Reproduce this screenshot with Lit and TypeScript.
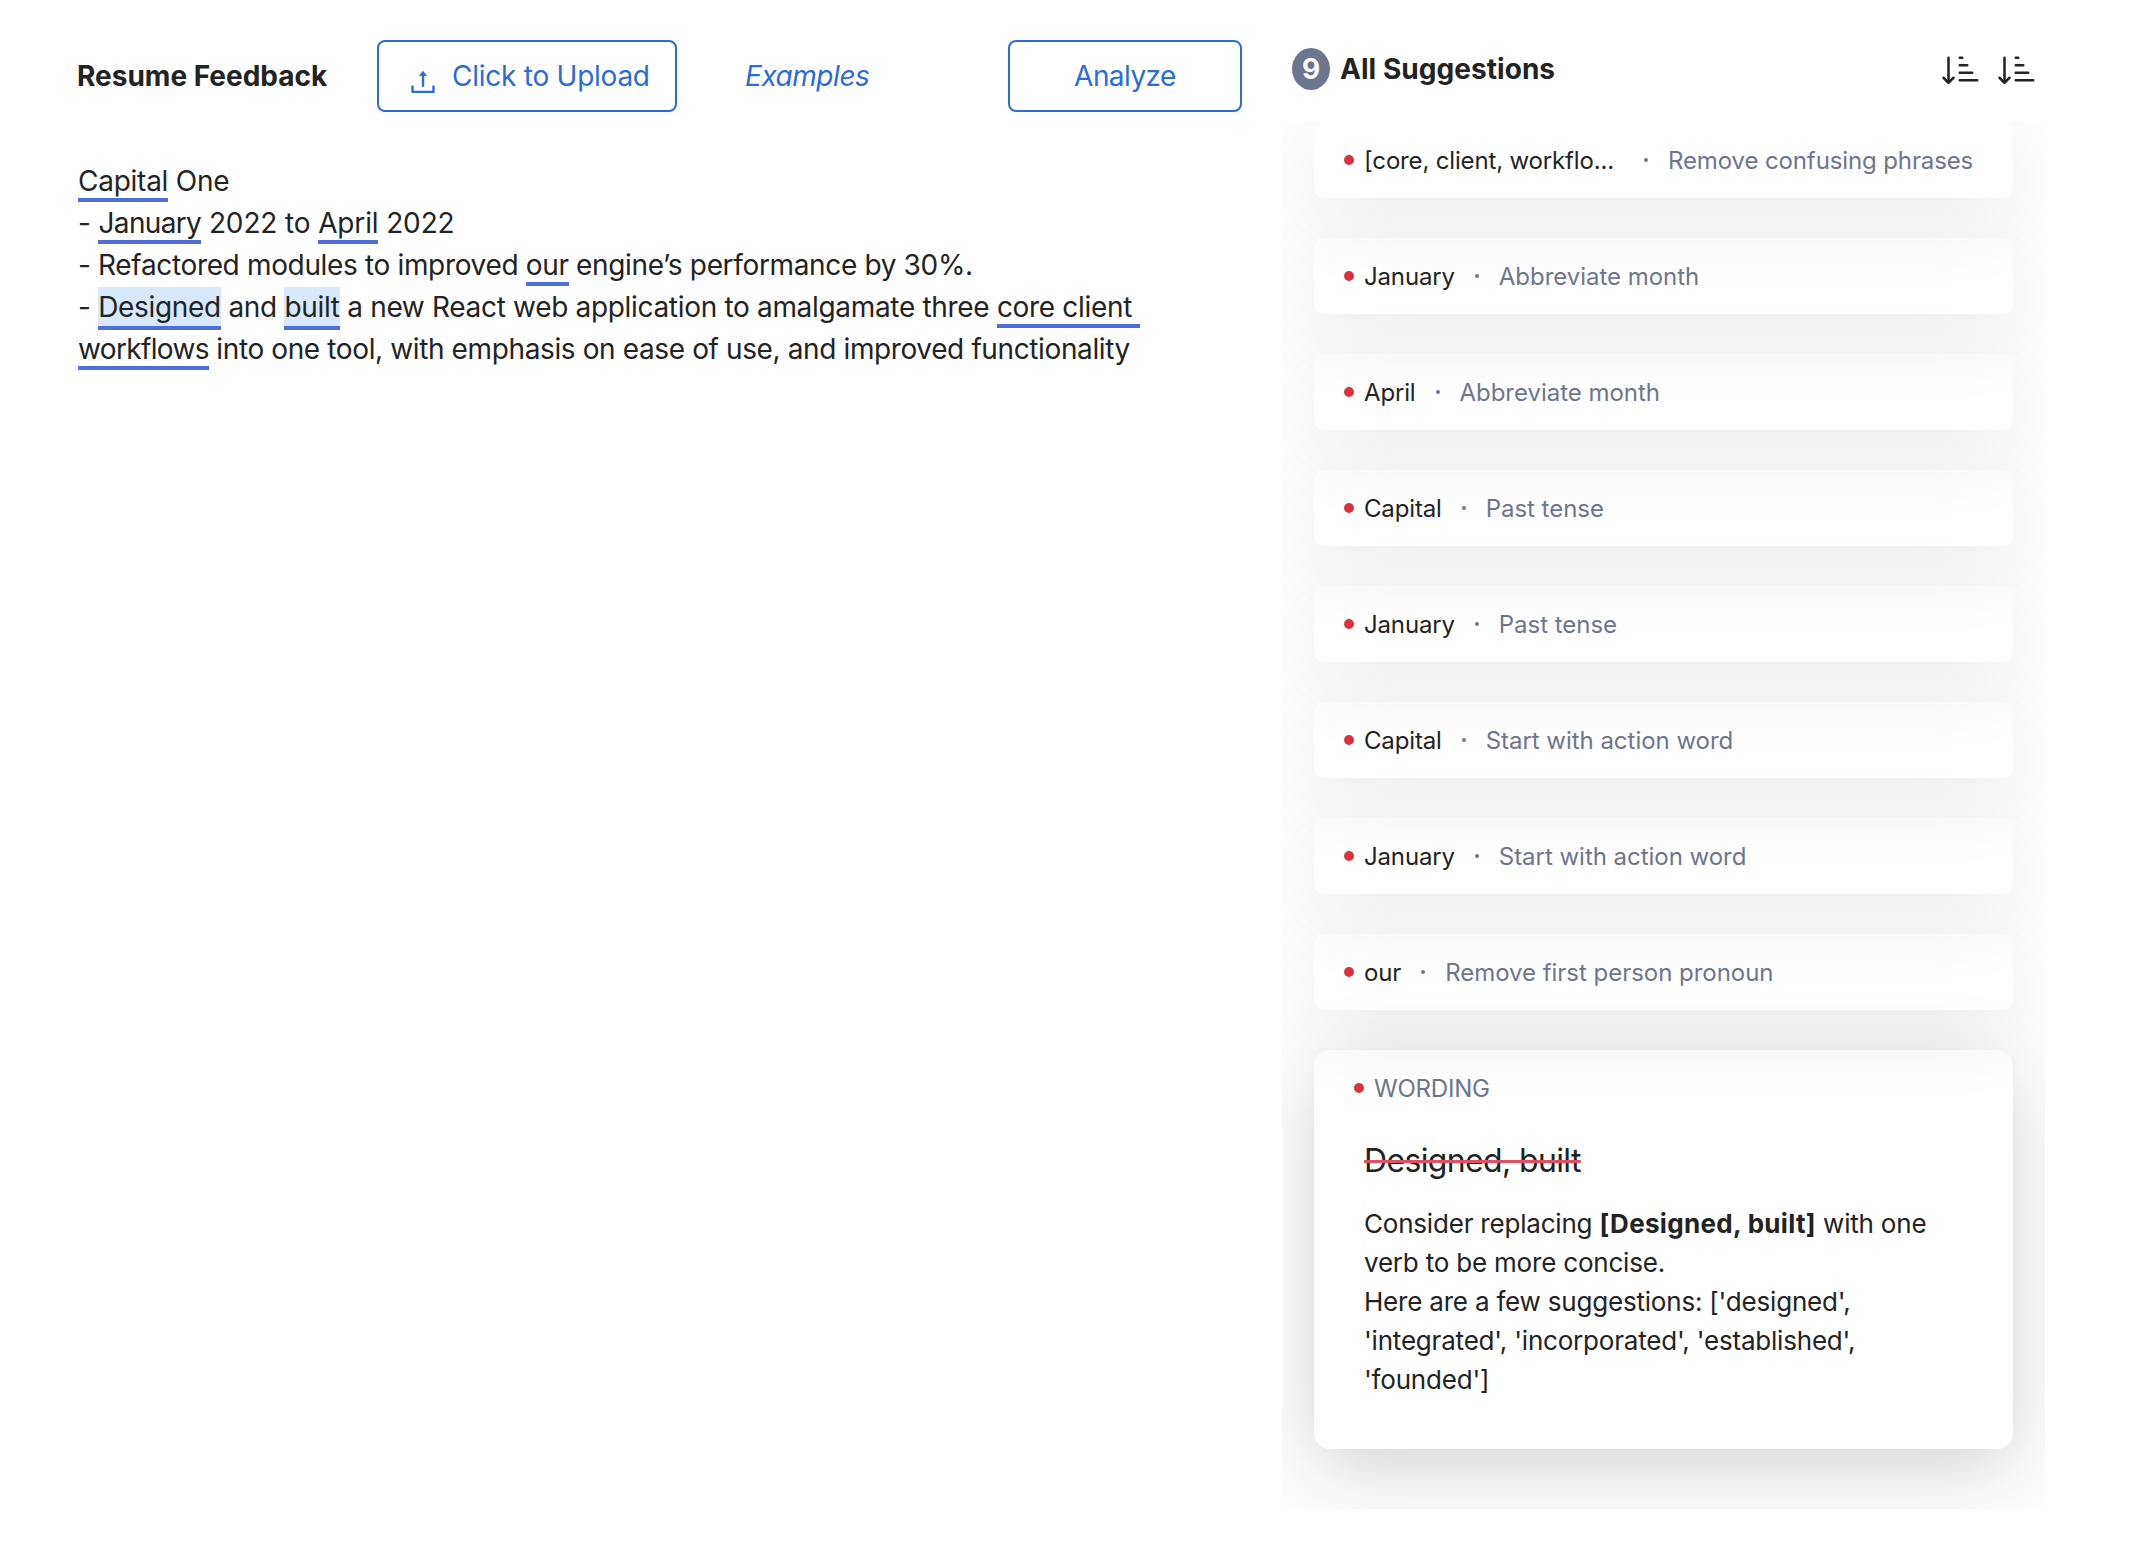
import { LitElement, html, css, svg } from "lit";
import { customElement, property } from "lit/decorators.js";
import { classMap } from "lit/directives/class-map.js";

interface Segment {
  text: string;
  mark?: "flagged" | "active";
}

interface Suggestion {
  phrase: string;
  advice: string;
  wide?: boolean;
}

const RESUME: Segment[][] = [
  [{ text: "Capital", mark: "flagged" }, { text: " One" }],
  [
    { text: "- " },
    { text: "January", mark: "flagged" },
    { text: " 2022 to " },
    { text: "April", mark: "flagged" },
    { text: " 2022" },
  ],
  [
    { text: "- Refactored modules to improved " },
    { text: "our", mark: "flagged" },
    { text: " engine’s performance by 30%." },
  ],
  [
    { text: "- " },
    { text: "Designed", mark: "active" },
    { text: " and " },
    { text: "built", mark: "active" },
    { text: " a new React web application to amalgamate three " },
    { text: "core client ", mark: "flagged" },
  ],
  [
    { text: "workflows", mark: "flagged" },
    { text: " into one tool, with emphasis on ease of use, and improved functionality" },
  ],
];

const SUGGESTIONS: Suggestion[] = [
  { phrase: "[core, client, workflo...", advice: "Remove confusing phrases", wide: true },
  { phrase: "January", advice: "Abbreviate month" },
  { phrase: "April", advice: "Abbreviate month" },
  { phrase: "Capital", advice: "Past tense" },
  { phrase: "January", advice: "Past tense" },
  { phrase: "Capital", advice: "Start with action word" },
  { phrase: "January", advice: "Start with action word" },
  { phrase: "our", advice: "Remove first person pronoun" },
];

const uploadIcon = svg`<path d="M400 317.7h73.9V656c0 4.4 3.6 8 8 8h60c4.4 0 8-3.6 8-8V317.7H624c6.7 0 10.4-7.7 6.3-12.9L518.3 163a8 8 0 00-12.6 0l-112 141.7c-4.1 5.3-.4 13 6.3 13zM878 626h-60c-4.4 0-8 3.6-8 8v154H214V634c0-4.4-3.6-8-8-8h-60c-4.4 0-8 3.6-8 8v198c0 17.7 14.3 32 32 32h684c17.7 0 32-14.3 32-32V634c0-4.4-3.6-8-8-8z"/>`;

const sortIcon = svg`<path d="M3.5 3.5a.5.5 0 0 0-1 0v8.793l-1.146-1.147a.5.5 0 0 0-.708.708l2 1.999.007.007a.497.497 0 0 0 .7-.006l2-2a.5.5 0 0 0-.707-.708L3.5 12.293V3.5zm4 .5a.5.5 0 0 1 0-1h1a.5.5 0 0 1 0 1h-1zm0 3a.5.5 0 0 1 0-1h3a.5.5 0 0 1 0 1h-3zm0 3a.5.5 0 0 1 0-1h5a.5.5 0 0 1 0 1h-5zM7 12.5a.5.5 0 0 0 .5.5h7a.5.5 0 0 0 0-1h-7a.5.5 0 0 0-.5.5z"/>`;

@customElement("resume-editor")
export class ResumeEditor extends LitElement {
  static styles = css`
    :host {
      display: block;
      padding: 40px 0 0 78px;
    }
    .toolbar {
      display: flex;
      align-items: center;
      height: 72px;
      margin-left: -1px;
    }
    .title {
      width: 300px;
      margin: 0;
      font-size: 28px;
      font-weight: 700;
      white-space: nowrap;
    }
    .button {
      box-sizing: border-box;
      display: flex;
      align-items: center;
      justify-content: center;
      height: 72px;
      border: 2px solid #2a6cda;
      border-radius: 8px;
      background: #fff;
      box-shadow: 0 4px 0 rgba(0, 0, 0, 0.016);
      color: #2a6cda;
      font: inherit;
      letter-spacing: -0.25px;
      white-space: nowrap;
    }
    .upload {
      width: 300px;
      padding: 0 0 0 30px;
      justify-content: flex-start;
      gap: 15px;
    }
    .upload svg {
      margin-top: 12px;
    }
    .analyze {
      width: 234px;
      padding: 0;
      letter-spacing: -0.55px;
    }
    .examples {
      width: 263px;
      margin-left: 68px;
      color: #2a6cda;
      font-style: italic;
      letter-spacing: -0.46px;
    }
    .document {
      margin-top: 48px;
      line-height: 42px;
      white-space: pre;
    }
    .line {
      height: 42px;
      letter-spacing: -0.38px;
    }
    .line:nth-child(1) {
      letter-spacing: -0.25px;
    }
    .line:nth-child(2) {
      letter-spacing: -0.14px;
    }
    .line:nth-child(3) {
      letter-spacing: -0.344px;
    }
    .line:nth-child(4) {
      letter-spacing: -0.32px;
    }
    .line:nth-child(2) .flagged:first-child,
    .line:nth-child(5) .flagged {
      letter-spacing: -0.65px;
    }
    .flagged,
    .active {
      border-bottom: 4px solid #4e6fdb;
    }
    .active {
      padding: 3px 0 2px;
      background: #d9e9fd;
      background-clip: padding-box;
    }
  `;

  render() {
    return html`
      <div class="toolbar">
        <h1 class="title">Resume Feedback</h1>
        <button class="button upload">
          <svg width="28" height="28" viewBox="64 64 896 896" fill="currentColor">${uploadIcon}</svg>
          <span>Click to Upload</span>
        </button>
        <span class="examples">Examples</span>
        <button class="button analyze">Analyze</button>
      </div>
      <div class="document">${RESUME.map(
        (line) =>
          html`<div class="line">${line.map((s) =>
            s.mark ? html`<span class=${s.mark}>${s.text}</span>` : s.text
          )}</div>`
      )}</div>
    `;
  }
}

@customElement("suggestion-card")
export class SuggestionCard extends LitElement {
  @property({ attribute: false }) item!: Suggestion;

  static styles = css`
    :host {
      display: block;
    }
    .card {
      box-sizing: border-box;
      display: flex;
      align-items: center;
      height: 76px;
      padding: 0 30px;
      border-radius: 10px;
      box-shadow: 0 20px 80px rgba(0, 0, 0, 0.085);
      font-size: 24px;
      white-space: nowrap;
    }
    .bullet {
      flex: none;
      width: 10px;
      height: 10px;
      margin-right: 10px;
      border-radius: 50%;
      background: #d9333f;
    }
    .phrase {
      letter-spacing: -0.16px;
    }
    .wide .phrase {
      width: 260px;
    }
    .separator {
      flex: none;
      width: 4px;
      height: 4px;
      margin: 0 20px;
      border-radius: 50%;
      background: #6d768d;
    }
    .advice {
      color: #6d768d;
      letter-spacing: -0.03px;
    }
    .wide .advice {
      letter-spacing: -0.12px;
    }
  `;

  render() {
    return html`<div class=${classMap({ card: true, wide: !!this.item.wide })}>
      <span class="bullet"></span>
      <span class="phrase">${this.item.phrase}</span>
      <span class="separator"></span>
      <span class="advice">${this.item.advice}</span>
    </div>`;
  }
}

@customElement("suggestion-detail")
export class SuggestionDetail extends LitElement {
  static styles = css`
    :host {
      display: block;
    }
    .card {
      box-sizing: border-box;
      height: 399px;
      padding: 0 40px;
      border-radius: 16px;
      box-shadow: 0 20px 80px rgba(0, 0, 0, 0.18);
    }
    .category {
      display: flex;
      align-items: center;
      gap: 10px;
      height: 76px;
      color: #6d768d;
      font-size: 24px;
      letter-spacing: -0.2px;
    }
    .bullet {
      width: 10px;
      height: 10px;
      border-radius: 50%;
      background: #d9333f;
    }
    .body {
      padding: 11px 0 0 10px;
      white-space: nowrap;
    }
    .phrase {
      margin: 0 0 19px;
      font-size: 32px;
      font-weight: 400;
      line-height: 48px;
      letter-spacing: -0.64px;
    }
    .struck {
      text-decoration: line-through 3px #e05062;
    }
    .advice {
      margin: 0;
      font-size: 26px;
      line-height: 39px;
      letter-spacing: -0.2px;
    }
    .quoted {
      font-weight: 700;
      letter-spacing: 0.32px;
    }
  `;

  render() {
    return html`<div class="card">
      <div class="category"><span class="bullet"></span>WORDING</div>
      <div class="body">
        <h3 class="phrase"><span class="struck">Designed, built</span></h3>
        <p class="advice">
          Consider replacing <b class="quoted">[Designed, built]</b> with one<br />
          verb to be more concise.<br />
          Here are a few suggestions: ['designed',<br />
          'integrated', 'incorporated', 'established',<br />
          'founded']
        </p>
      </div>
    </div>`;
  }
}

@customElement("suggestion-panel")
export class SuggestionPanel extends LitElement {
  static styles = css`
    :host {
      display: block;
      padding-top: 48px;
    }
    .header {
      display: flex;
      align-items: center;
      height: 42px;
      padding: 0 8px 0 10px;
    }
    .count {
      display: flex;
      align-items: center;
      justify-content: center;
      width: 38px;
      height: 42px;
      margin-right: 10px;
      border-radius: 50%;
      background: #6d768d;
      color: #fff;
      font-weight: 700;
    }
    .title {
      flex: 1;
      margin: 0;
      font-size: 28px;
      font-weight: 700;
      letter-spacing: 0.05px;
    }
    .sorts {
      display: flex;
      gap: 16px;
    }
    .list {
      box-sizing: border-box;
      display: flex;
      flex-direction: column;
      gap: 40px;
      height: 1387px;
      margin-top: 32px;
      padding: 0 32px;
      overflow: hidden;
    }
  `;

  private sort() {
    return html`<svg width="40" height="40" viewBox="0 0 16 16" fill="currentColor">${sortIcon}</svg>`;
  }

  render() {
    return html`
      <div class="header">
        <span class="count">9</span>
        <h2 class="title">All Suggestions</h2>
        <div class="sorts">${this.sort()}${this.sort()}</div>
      </div>
      <div class="list">
        ${SUGGESTIONS.map((s) => html`<suggestion-card .item=${s}></suggestion-card>`)}
        <suggestion-detail></suggestion-detail>
      </div>
    `;
  }
}

@customElement("app-root")
export class AppRoot extends LitElement {
  static styles = css`
    :host {
      display: grid;
      grid-template-columns: 1282px 763px;
      height: 1544px;
      overflow: hidden;
      background: #fff;
      color: #222324;
      font-family: Inter, "Liberation Sans", sans-serif;
      font-size: 28px;
    }
  `;

  render() {
    return html`<resume-editor></resume-editor><suggestion-panel></suggestion-panel>`;
  }
}
